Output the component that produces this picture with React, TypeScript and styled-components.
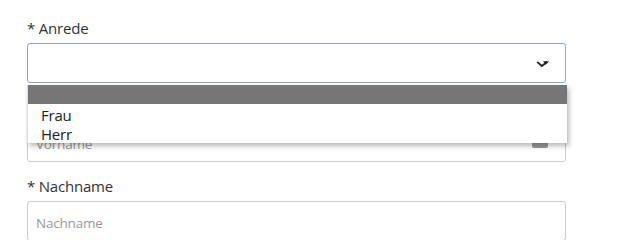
import React from "react";
import styled, { createGlobalStyle } from "styled-components";

const GlobalStyle = createGlobalStyle`
  * { box-sizing: border-box; }
  body {
    margin: 0;
    background: #ffffff;
    font-family: "Open Sans", "Noto Sans", Arial, sans-serif;
    color: #333333;
  }
`;

const Form = styled.form`
  width: 539px;
  margin-left: 27px;
  padding-top: 19px;
`;

const Group = styled.div`
  position: relative;
  margin-bottom: 15px;
`;

const Label = styled.label`
  display: block;
  font-size: 15px;
  line-height: 18px;
  margin-bottom: 6px;
  color: #333333;
  letter-spacing: -0.2px;
`;

const Field = styled.div<{ $focused?: boolean }>`
  position: relative;
  height: 40px;
  border: 1px solid ${(p) => (p.$focused ? "#8ea6bc" : "#cccccc")};
  border-radius: 3px;
  background: #ffffff;
  display: flex;
  align-items: center;
  padding: 0 8px;
`;

const Placeholder = styled.span`
  font-size: 13.5px;
  color: #9a9a9a;
  padding-top: 4px;
  letter-spacing: -0.2px;
`;

const Chevron = styled.svg`
  margin-left: auto;
  margin-right: 7px;
  margin-top: 2px;
`;

const CardIcon = styled.svg`
  margin-left: auto;
  margin-right: 9px;
`;

const Menu = styled.ul`
  position: absolute;
  top: 66px;
  left: 0;
  width: 540px;
  margin: 0;
  padding: 0 0 1px;
  list-style: none;
  background: #ffffff;
  border-left: 1px solid #dddddd;
  box-shadow: 2px 3px 5px rgba(0, 0, 0, 0.28);
  z-index: 10;
`;

const Option = styled.li<{ $active?: boolean }>`
  height: 19px;
  line-height: 22px;
  font-size: 15px;
  padding-left: 13px;
  color: #222222;
  letter-spacing: -0.2px;
  background: ${(p) => (p.$active ? "#767676" : "transparent")};
`;

export default function App() {
  return (
    <>
      <GlobalStyle />
      <Form>
        <Group>
          <Label>* Anrede</Label>
          <Field $focused>
            <Chevron width="14" height="8" viewBox="0 0 14 8">
              <polyline points="1.2,1.8 5.8,6 11,2" stroke="#222" strokeWidth="1.8" fill="none" />
              <path d="M7 1.2 L13.2 1.2 L9.5 4.8 Z" fill="#222" />
            </Chevron>
          </Field>
          <Menu>
            <Option $active />
            <Option>Frau</Option>
            <Option>Herr</Option>
          </Menu>
        </Group>
        <Group>
          <Label>* Vorname</Label>
          <Field>
            <Placeholder>Vorname</Placeholder>
            <CardIcon width="16" height="12" viewBox="0 0 16 12">
              <rect x="0" y="0" width="16" height="12" rx="2" fill="#9a9a9a" />
            </CardIcon>
          </Field>
        </Group>
        <Group>
          <Label>* Nachname</Label>
          <Field>
            <Placeholder>Nachname</Placeholder>
          </Field>
        </Group>
      </Form>
    </>
  );
}
